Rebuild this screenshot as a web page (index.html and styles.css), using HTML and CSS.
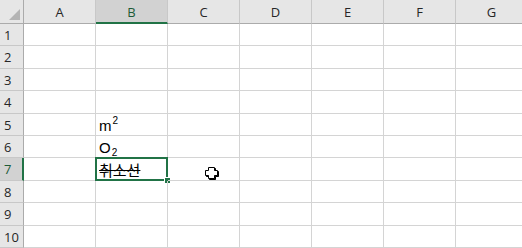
FILE: index.html
```html
<!DOCTYPE html>
<html lang="ko">
<head>
<meta charset="utf-8">
<link rel="stylesheet" href="styles.css">
</head>
<body>
<div class="sheet">
  <div class="corner"><span class="tri"></span></div>
  <div class="ch">A</div><div class="ch sel">B</div><div class="ch">C</div><div class="ch">D</div><div class="ch">E</div><div class="ch">F</div><div class="ch">G</div>

  <div class="rh">1</div><div class="c"></div><div class="c"></div><div class="c"></div><div class="c"></div><div class="c"></div><div class="c"></div><div class="c"></div>
  <div class="rh">2</div><div class="c"></div><div class="c"></div><div class="c"></div><div class="c"></div><div class="c"></div><div class="c"></div><div class="c"></div>
  <div class="rh">3</div><div class="c"></div><div class="c"></div><div class="c"></div><div class="c"></div><div class="c"></div><div class="c"></div><div class="c"></div>
  <div class="rh">4</div><div class="c"></div><div class="c"></div><div class="c"></div><div class="c"></div><div class="c"></div><div class="c"></div><div class="c"></div>
  <div class="rh">5</div><div class="c"></div><div class="c txt">m<sup>2</sup></div><div class="c"></div><div class="c"></div><div class="c"></div><div class="c"></div><div class="c"></div>
  <div class="rh">6</div><div class="c"></div><div class="c txt">O<sub>2</sub></div><div class="c"></div><div class="c"></div><div class="c"></div><div class="c"></div><div class="c"></div>
  <div class="rh sel">7</div><div class="c"></div><div class="c txt active"><span class="strike">취소선</span><span class="selbox"></span><span class="handle"></span></div><div class="c"><svg class="cursor" width="15" height="14" viewBox="0 0 15 14"><path d="M4.5 1.5H10.5V4.5H13.5V9.5H10.5V12.5H4.5V9.5H1.5V4.5H4.5Z" fill="#000" stroke="#000" stroke-width="1"/><path d="M3.5 0.5H9.5V3.5H12.5V8.5H9.5V11.5H3.5V8.5H0.5V3.5H3.5Z" fill="#fff" stroke="#000" stroke-width="1"/></svg></div><div class="c"></div><div class="c"></div><div class="c"></div><div class="c"></div>
  <div class="rh">8</div><div class="c"></div><div class="c"></div><div class="c"></div><div class="c"></div><div class="c"></div><div class="c"></div><div class="c"></div>
  <div class="rh">9</div><div class="c"></div><div class="c"></div><div class="c"></div><div class="c"></div><div class="c"></div><div class="c"></div><div class="c"></div>
  <div class="rh">10</div><div class="c"></div><div class="c"></div><div class="c"></div><div class="c"></div><div class="c"></div><div class="c"></div><div class="c"></div>
</div>
</body>
</html>
```

FILE: styles.css
```css
html, body {
  margin: 0;
  padding: 0;
  background: #fff;
  overflow: hidden;
}
.sheet {
  display: grid;
  grid-template-columns: 24px repeat(7, 72px);
  grid-template-rows: 24px 22px 23px 22px 23px 22px 22px 23px 22px 23px 22px;
  font-family: "Open Sans", "Noto Sans", sans-serif;
}
.sheet > div {
  box-sizing: border-box;
}
.corner {
  background: #e6e6e6;
  border-right: 1px solid #ababab;
  border-bottom: 1px solid #ababab;
  position: relative;
}
.tri {
  position: absolute;
  right: 3px;
  bottom: 3px;
  width: 0;
  height: 0;
  border-left: 11px solid transparent;
  border-bottom: 11px solid #b4b4b4;
}
.ch {
  background: #e6e6e6;
  border-right: 1px solid #c8c8c8;
  border-bottom: 1px solid #ababab;
  display: flex;
  align-items: center;
  justify-content: center;
  font-size: 13px;
  color: #262626;
  padding-top: 1px;
}
.ch.sel {
  background: #d2d2d2;
  border-bottom: 2px solid #217346;
  color: #1d5b38;
  padding-top: 2px;
}
.rh {
  background: #e6e6e6;
  border-right: 1px solid #ababab;
  border-bottom: 1px solid #c8c8c8;
  display: flex;
  align-items: center;
  padding-left: 4px;
  font-size: 13px;
  color: #262626;
}
.rh.sel {
  background: #d2d2d2;
  border-right: 2px solid #217346;
  color: #1d5b38;
}
.c {
  border-right: 1px solid #d4d4d4;
  border-bottom: 1px solid #d4d4d4;
  position: relative;
}
.txt {
  font-family: "Liberation Sans", "Noto Sans CJK KR", sans-serif;
  font-size: 15px;
  color: #000;
  padding-left: 3px;
  padding-top: 3px;
  line-height: 18px;
  white-space: nowrap;
}
.txt sup {
  font-size: 10px;
  line-height: 0;
  position: relative;
  top: -7px;
  vertical-align: baseline;
  margin-left: 1px;
}
.txt sub {
  font-size: 10px;
  line-height: 0;
  position: relative;
  top: 3px;
  vertical-align: baseline;
  margin-left: 1px;
}
.strike {
  font-family: "Noto Sans CJK KR", sans-serif;
  font-size: 15px;
  font-weight: 400;
  line-height: 18px;
  text-decoration: line-through;
  text-decoration-thickness: 1px;
}
.selbox {
  position: absolute;
  left: -1px;
  top: -1px;
  right: -1px;
  bottom: -1px;
  border: 2px solid #217346;
}
.handle {
  position: absolute;
  right: -3px;
  bottom: -3px;
  width: 5px;
  height: 5px;
  background: #217346;
  border-left: 1px solid #fff;
  border-top: 1px solid #fff;
}
.cursor {
  position: absolute;
  left: 37px;
  top: 9px;
}
```
